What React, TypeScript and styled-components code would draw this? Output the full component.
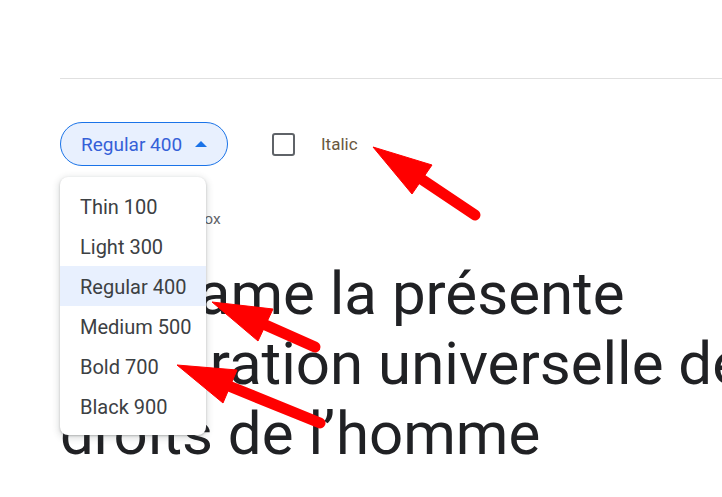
import { createGlobalStyle, styled } from "styled-components"

const GlobalStyle = createGlobalStyle`
  html, body {
    margin: 0;
    padding: 0;
    background: #ffffff;
    overflow: hidden;
  }
  body {
    font-family: Roboto, "Noto Sans", Arial, sans-serif;
  }
`

const Page = styled.div`
  position: relative;
  width: 722px;
  height: 497px;
  overflow: hidden;
  padding: 78px 0 0 60px;
  box-sizing: border-box;
`

const Divider = styled.div`
  height: 1px;
  background-color: #e0e0e0;
  margin-right: -60px;
`

const Controls = styled.div`
  position: relative;
  margin-top: 43px;
  display: flex;
  align-items: center;
  height: 44px;
`

const WeightButton = styled.button`
  height: 44px;
  width: 168px;
  box-sizing: border-box;
  padding: 0 20px 0 20px;
  border: 1px solid #1a73e8;
  border-radius: 22px;
  background-color: #e8f0fe;
  color: #3560d8;
  font-family: Roboto, Arial, sans-serif;
  font-size: 19px;
  display: flex;
  align-items: center;
  justify-content: space-between;
  cursor: pointer;
`

const Caret = styled.span`
  width: 0;
  height: 0;
  border-left: 6px solid transparent;
  border-right: 6px solid transparent;
  border-bottom: 6px solid #1a73e8;
`

const ItalicToggle = styled.label`
  margin-left: 44px;
  display: flex;
  align-items: center;
  gap: 26px;
  font-size: 17px;
  color: #6a5840;
`

const Box = styled.span`
  width: 23px;
  height: 23px;
  box-sizing: border-box;
  border: 2px solid #5f6368;
  border-radius: 3px;
`

const Menu = styled.ul`
  position: absolute;
  top: 55px;
  left: 0;
  z-index: 2;
  width: 146px;
  margin: 0;
  padding: 9px 0 9px;
  list-style: none;
  background: #ffffff;
  border-radius: 8px;
  box-shadow: 0 2px 6px 2px rgba(60, 64, 67, 0.15), 0 1px 2px rgba(60, 64, 67, 0.3);
`

const MenuItem = styled.li<{ $active?: boolean }>`
  height: 40px;
  display: flex;
  align-items: center;
  padding: 2px 0 0 20px;
  box-sizing: border-box;
  font-size: 20px;
  color: #3c4043;
  background-color: ${(p) => (p.$active ? "#e8f0fe" : "transparent")};
`

const PreviewLabel = styled.div`
  margin-top: 43px;
  font-size: 15.5px;
  line-height: 20px;
  color: #5f6368;
`

const PreviewText = styled.div`
  margin-top: 30px;
  width: 780px;
  font-size: 60px;
  line-height: 70px;
  color: #202124;
`

const Annotations = styled.svg`
  position: absolute;
  inset: 0;
  z-index: 5;
  pointer-events: none;
`

const weights = [
  "Thin 100",
  "Light 300",
  "Regular 400",
  "Medium 500",
  "Bold 700",
  "Black 900",
]

type ArrowProps = {
  tip: [number, number]
  wingA: [number, number]
  wingB: [number, number]
  tail: [number, number]
}

const Arrow = ({ tip, wingA, wingB, tail }: ArrowProps) => {
  const baseX = (wingA[0] + wingB[0]) / 2
  const baseY = (wingA[1] + wingB[1]) / 2
  return (
    <g fill="#ff0000" stroke="#ff0000">
      <line x1={baseX} y1={baseY} x2={tail[0]} y2={tail[1]} strokeWidth={11} strokeLinecap="round" />
      <polygon points={`${tip.join(",")} ${wingA.join(",")} ${wingB.join(",")}`} strokeWidth={1} strokeLinejoin="round" />
    </g>
  )
}

export default function App() {
  return (
    <>
      <GlobalStyle />
      <Page>
        <Divider />
        <Controls>
          <WeightButton>
            Regular 400
            <Caret />
          </WeightButton>
          <ItalicToggle>
            <Box />
            Italic
          </ItalicToggle>
          <Menu>
            {weights.map((w) => (
              <MenuItem key={w} $active={w === "Regular 400"}>
                {w}
              </MenuItem>
            ))}
          </Menu>
        </Controls>
        <PreviewLabel>Type in the preview box</PreviewLabel>
        <PreviewText>
          Proclame la présente Déclaration universelle des droits de l’homme
        </PreviewText>
        <Annotations width={722} height={497} viewBox="0 0 722 497">
          <Arrow tip={[373, 147]} wingA={[432, 165]} wingB={[412, 194]} tail={[475, 215]} />
          <Arrow tip={[212, 302]} wingA={[273, 309]} wingB={[258, 341]} tail={[315, 347]} />
          <Arrow tip={[177, 365]} wingA={[237, 370]} wingB={[223, 403]} tail={[320, 423]} />
        </Annotations>
      </Page>
    </>
  )
}
